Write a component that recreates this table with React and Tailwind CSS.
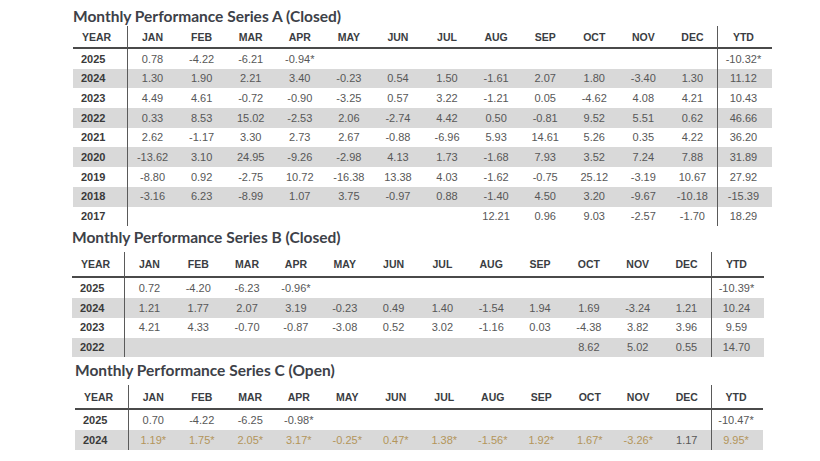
import React from "react";

const MONTHS = ["JAN", "FEB", "MAR", "APR", "MAY", "JUN", "JUL", "AUG", "SEP", "OCT", "NOV", "DEC"];

const seriesA = [
  ["2025", "0.78", "-4.22", "-6.21", "-0.94*", "", "", "", "", "", "", "", "", "-10.32*"],
  ["2024", "1.30", "1.90", "2.21", "3.40", "-0.23", "0.54", "1.50", "-1.61", "2.07", "1.80", "-3.40", "1.30", "11.12"],
  ["2023", "4.49", "4.61", "-0.72", "-0.90", "-3.25", "0.57", "3.22", "-1.21", "0.05", "-4.62", "4.08", "4.21", "10.43"],
  ["2022", "0.33", "8.53", "15.02", "-2.53", "2.06", "-2.74", "4.42", "0.50", "-0.81", "9.52", "5.51", "0.62", "46.66"],
  ["2021", "2.62", "-1.17", "3.30", "2.73", "2.67", "-0.88", "-6.96", "5.93", "14.61", "5.26", "0.35", "4.22", "36.20"],
  ["2020", "-13.62", "3.10", "24.95", "-9.26", "-2.98", "4.13", "1.73", "-1.68", "7.93", "3.52", "7.24", "7.88", "31.89"],
  ["2019", "-8.80", "0.92", "-2.75", "10.72", "-16.38", "13.38", "4.03", "-1.62", "-0.75", "25.12", "-3.19", "10.67", "27.92"],
  ["2018", "-3.16", "6.23", "-8.99", "1.07", "3.75", "-0.97", "0.88", "-1.40", "4.50", "3.20", "-9.67", "-10.18", "-15.39"],
  ["2017", "", "", "", "", "", "", "", "12.21", "0.96", "9.03", "-2.57", "-1.70", "18.29"],
];

const seriesB = [
  ["2025", "0.72", "-4.20", "-6.23", "-0.96*", "", "", "", "", "", "", "", "", "-10.39*"],
  ["2024", "1.21", "1.77", "2.07", "3.19", "-0.23", "0.49", "1.40", "-1.54", "1.94", "1.69", "-3.24", "1.21", "10.24"],
  ["2023", "4.21", "4.33", "-0.70", "-0.87", "-3.08", "0.52", "3.02", "-1.16", "0.03", "-4.38", "3.82", "3.96", "9.59"],
  ["2022", "", "", "", "", "", "", "", "", "", "8.62", "5.02", "0.55", "14.70"],
];

const seriesC = [
  ["2025", "0.70", "-4.22", "-6.25", "-0.98*", "", "", "", "", "", "", "", "", "-10.47*"],
  ["2024", "1.19*", "1.75*", "2.05*", "3.17*", "-0.25*", "0.47*", "1.38*", "-1.56*", "1.92*", "1.67*", "-3.26*", "1.17", "9.95*"],
];

// cells in series C 2024 that are estimates (gold)
const goldC = { 1: [1, 2, 3, 4, 5, 6, 7, 8, 9, 10, 11, 13] };

function PerfTable({ title, rows, cols, headH, rowH, gold = {} }) {
  return (
    <section>
      <h2 className="font-['Lato',sans-serif] font-bold text-[15.5px] text-[#3d4148] h-[20px] leading-[20px]">
        {title}
      </h2>
      <div className={"grid " + cols + " font-['Liberation_Sans',Arial,sans-serif]"}>
        {/* header */}
        <div className={headH + " flex items-center pl-[9px] pt-[2px] text-[10.5px] font-bold text-[#3a3d42] border-r border-[#5a5a5a] border-b-2 border-b-[#4a4a4a]"}>
          YEAR
        </div>
        {MONTHS.map((m) => (
          <div key={m} className={headH + " flex items-center justify-center pt-[2px] text-[10.5px] font-bold text-[#3a3d42] border-b-2 border-[#4a4a4a]"}>
            {m}
          </div>
        ))}
        <div className={headH + " flex items-center justify-center pt-[2px] pr-[3px] text-[10.5px] font-bold text-[#3a3d42] border-l border-[#5a5a5a] border-b-2 border-b-[#4a4a4a]"}>
          YTD
        </div>

        {rows.map((r, i) => {
          const shade = i % 2 === 1 ? "bg-[#d9d9d9]" : "bg-white";
          const g = gold[i] || [];
          return r.map((v, j) => {
            if (j === 0) {
              return (
                <div key={j} className={rowH + " " + shade + " flex items-center pl-[8px] text-[11px] font-bold text-[#3a3a3a] border-r border-[#5a5a5a]"}>
                  {v}
                </div>
              );
            }
            const color = g.includes(j) ? "text-[#b3955a]" : "text-[#575757]";
            const edge = j === 13 ? " border-l border-[#5a5a5a] pr-[3px]" : "";
            return (
              <div key={j} className={rowH + " " + shade + " " + color + " flex items-center justify-center text-[11px]" + edge}>
                {v}
              </div>
            );
          });
        })}
      </div>
    </section>
  );
}

export default function App() {
  return (
    <div className="w-[820px] h-[461px] bg-white overflow-hidden pt-[6px]">
      <div className="ml-[73px] w-[699px]">
        <PerfTable
          title="Monthly Performance Series A (Closed)"
          rows={seriesA}
          cols="grid-cols-[55px_repeat(12,49.08px)_55px]"
          headH="h-[23px]"
          rowH="h-[19.7px]"
        />
      </div>
      <div className="ml-[72px] w-[692px] mt-[1px]">
        <PerfTable
          title="Monthly Performance Series B (Closed)"
          rows={seriesB}
          cols="grid-cols-[53px_repeat(12,48.83px)_53px]"
          headH="h-[26px] mt-[5px]"
          rowH="h-[19.8px]"
        />
      </div>
      <div className="ml-[75px] w-[688px] mt-[3px]">
        <PerfTable
          title="Monthly Performance Series C (Open)"
          rows={seriesC}
          cols="grid-cols-[54px_repeat(12,48.5px)_52px]"
          headH="h-[25px] mt-[5px]"
          rowH="h-[20px]"
          gold={goldC}
        />
      </div>
    </div>
  );
}
